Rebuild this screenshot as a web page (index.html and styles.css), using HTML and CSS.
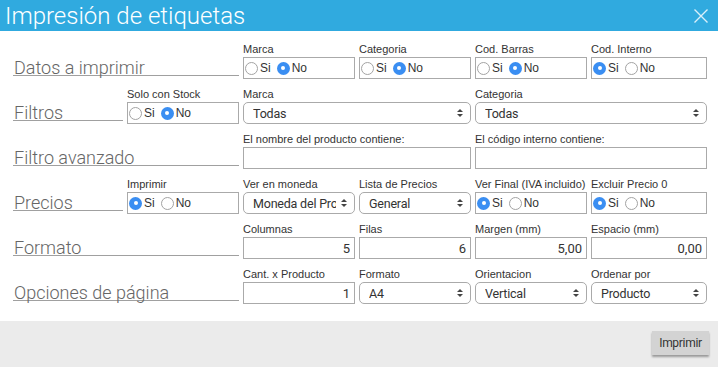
FILE: index.html
```html
<!DOCTYPE html>
<html>
<head>
  <title>Impresión de etiquetas</title>
  <link rel="stylesheet" href="styles.css">
</head>
<body>
  <div class="dialog">
    <!-- Title bar -->
    <div class="titlebar">
      <h1>Impresión de etiquetas</h1>
      <svg class="close" width="14" height="14" viewBox="0 0 14 14">
        <path d="M0.5 0.5 L13.5 13.5 M13.5 0.5 L0.5 13.5" stroke="#d9f0fa" stroke-width="1.4" fill="none"/>
      </svg>
    </div>

    <div class="content">
      <!-- Datos a imprimir -->
      <div class="row">
        <div class="section span2"><span>Datos a imprimir</span></div>
        <div class="field">
          <div class="label">Marca</div>
          <div class="radios"><span class="radio"></span>Si<span class="radio on"></span>No</div>
        </div>
        <div class="field">
          <div class="label">Categoria</div>
          <div class="radios"><span class="radio"></span>Si<span class="radio on"></span>No</div>
        </div>
        <div class="field">
          <div class="label">Cod. Barras</div>
          <div class="radios"><span class="radio"></span>Si<span class="radio on"></span>No</div>
        </div>
        <div class="field">
          <div class="label">Cod. Interno</div>
          <div class="radios"><span class="radio on"></span>Si<span class="radio"></span>No</div>
        </div>
      </div>

      <!-- Filtros -->
      <div class="row">
        <div class="section"><span>Filtros</span></div>
        <div class="field">
          <div class="label">Solo con Stock</div>
          <div class="radios"><span class="radio"></span>Si<span class="radio on"></span>No</div>
        </div>
        <div class="field span2">
          <div class="label">Marca</div>
          <div class="select"><select><option>Todas</option></select></div>
        </div>
        <div class="field span2">
          <div class="label">Categoria</div>
          <div class="select"><select><option>Todas</option></select></div>
        </div>
      </div>

      <!-- Filtro avanzado -->
      <div class="row">
        <div class="section span2"><span>Filtro avanzado</span></div>
        <div class="field span2">
          <div class="label">El nombre del producto contiene:</div>
          <input type="text" class="text">
        </div>
        <div class="field span2">
          <div class="label">El código interno contiene:</div>
          <input type="text" class="text">
        </div>
      </div>

      <!-- Precios -->
      <div class="row">
        <div class="section"><span>Precios</span></div>
        <div class="field">
          <div class="label">Imprimir</div>
          <div class="radios"><span class="radio on"></span>Si<span class="radio"></span>No</div>
        </div>
        <div class="field">
          <div class="label">Ver en moneda</div>
          <div class="select"><select><option>Moneda del Producto</option></select></div>
        </div>
        <div class="field">
          <div class="label">Lista de Precios</div>
          <div class="select"><select><option>General</option></select></div>
        </div>
        <div class="field">
          <div class="label">Ver Final (IVA incluido)</div>
          <div class="radios"><span class="radio on"></span>Si<span class="radio"></span>No</div>
        </div>
        <div class="field">
          <div class="label">Excluir Precio 0</div>
          <div class="radios"><span class="radio on"></span>Si<span class="radio"></span>No</div>
        </div>
      </div>

      <!-- Formato -->
      <div class="row">
        <div class="section span2"><span>Formato</span></div>
        <div class="field">
          <div class="label">Columnas</div>
          <input type="text" class="text num" value="5">
        </div>
        <div class="field">
          <div class="label">Filas</div>
          <input type="text" class="text num" value="6">
        </div>
        <div class="field">
          <div class="label">Margen (mm)</div>
          <input type="text" class="text num" value="5,00">
        </div>
        <div class="field">
          <div class="label">Espacio (mm)</div>
          <input type="text" class="text num" value="0,00">
        </div>
      </div>

      <!-- Opciones de pagina -->
      <div class="row">
        <div class="section span2"><span>Opciones de página</span></div>
        <div class="field">
          <div class="label">Cant. x Producto</div>
          <input type="text" class="text num" value="1">
        </div>
        <div class="field">
          <div class="label">Formato</div>
          <div class="select"><select><option>A4</option></select></div>
        </div>
        <div class="field">
          <div class="label">Orientacion</div>
          <div class="select"><select><option>Vertical</option></select></div>
        </div>
        <div class="field">
          <div class="label">Ordenar por</div>
          <div class="select"><select><option>Producto</option></select></div>
        </div>
      </div>
    </div>

    <!-- Footer -->
    <div class="footer">
      <button class="print">Imprimir</button>
    </div>
  </div>
</body>
</html>
```

FILE: styles.css
```css
/* General page */
body {
  margin: 0;
  font-family: "Liberation Sans", Arial, sans-serif;
  color: #333;
  background: #fff;
}

.dialog {
  width: 718px;
  height: 367px;
  display: flex;
  flex-direction: column;
}

/* Title bar */
.titlebar {
  height: 31px;
  background: #30aadf;
  display: flex;
  align-items: center;
  justify-content: space-between;
  padding: 0 10px 0 5px;
  flex-shrink: 0;
}

.titlebar h1 {
  margin: 0;
  font-family: "Roboto Light", Roboto, sans-serif;
  font-weight: 300;
  font-size: 24px;
  line-height: 30px;
  color: #fff;
}

.close {
  margin-top: 1px;
}

/* Form content */
.content {
  flex: 1;
  padding: 11px 11px 0 11px;
}

.row {
  display: grid;
  grid-template-columns: 112px 112px 112px 112px 112px 116px;
  column-gap: 4px;
  margin-bottom: 8px;
}

.span2 {
  grid-column: span 2;
}

/* Section titles with underline */
.section {
  align-self: end;
  margin: 0 0 3px 2px;
  border-bottom: 1px solid #a0a0a0;
  font-family: "Roboto Light", Roboto, sans-serif;
  font-weight: 300;
  font-size: 18px;
  line-height: 15px;
  color: #666;
  white-space: nowrap;
}

.section span {
  padding-left: 1px;
}

.label {
  font-size: 11px;
  line-height: 14px;
  height: 14px;
  margin-bottom: 1px;
  white-space: nowrap;
  color: #333;
}

/* Radio groups */
.radios {
  box-sizing: border-box;
  height: 22px;
  border: 1px solid #aaa;
  display: flex;
  align-items: center;
  padding-left: 1px;
  font-size: 12px;
  color: #333;
}

.radio {
  box-sizing: border-box;
  width: 13px;
  height: 13px;
  border-radius: 50%;
  border: 1px solid #a3a3a3;
  background: #fff;
  margin-right: 2px;
  position: relative;
}

.radios .radio:nth-of-type(2) {
  margin-left: 6px;
}

.radio.on {
  border: none;
  background: #3a8ef2;
}

.radio.on:after {
  content: "";
  position: absolute;
  left: 4.5px;
  top: 4.5px;
  width: 4px;
  height: 4px;
  border-radius: 50%;
  background: #fff;
}

/* Selects */
.select {
  position: relative;
  height: 22px;
}

.select select {
  appearance: none;
  -webkit-appearance: none;
  box-sizing: border-box;
  width: 100%;
  height: 22px;
  border: 1px solid #aaa;
  border-radius: 5px;
  background: #fff;
  font-family: Roboto, sans-serif;
  font-size: 12.5px;
  letter-spacing: -0.2px;
  color: #333;
  padding: 0 18px 0 9px;
  outline: none;
}

.select:before,
.select:after {
  content: "";
  position: absolute;
  right: 8px;
  width: 0;
  height: 0;
  border-left: 3px solid transparent;
  border-right: 3px solid transparent;
}

.select:before {
  top: 7px;
  border-bottom: 3px solid #444;
}

.select:after {
  top: 12px;
  border-top: 3px solid #444;
}

/* Text inputs */
.text {
  box-sizing: border-box;
  display: block;
  width: 100%;
  height: 22px;
  margin: 0;
  border: 1px solid #aaa;
  padding: 0 4px;
  font-family: Roboto, sans-serif;
  font-size: 13px;
  color: #333;
  outline: none;
}

.num {
  text-align: right;
}

/* Footer */
.footer {
  height: 46px;
  flex-shrink: 0;
  background: #ebebeb;
  display: flex;
  justify-content: flex-end;
  align-items: flex-start;
  padding: 10px 9px 0 0;
  box-sizing: border-box;
}

.print {
  width: 57px;
  height: 24px;
  padding: 0;
  border: none;
  background: #d3d3d3;
  box-shadow: 0 2px 2px rgba(0, 0, 0, 0.35);
  font-family: Roboto, sans-serif;
  font-size: 12px;
  letter-spacing: -0.3px;
  color: #333;
  cursor: pointer;
}
```
